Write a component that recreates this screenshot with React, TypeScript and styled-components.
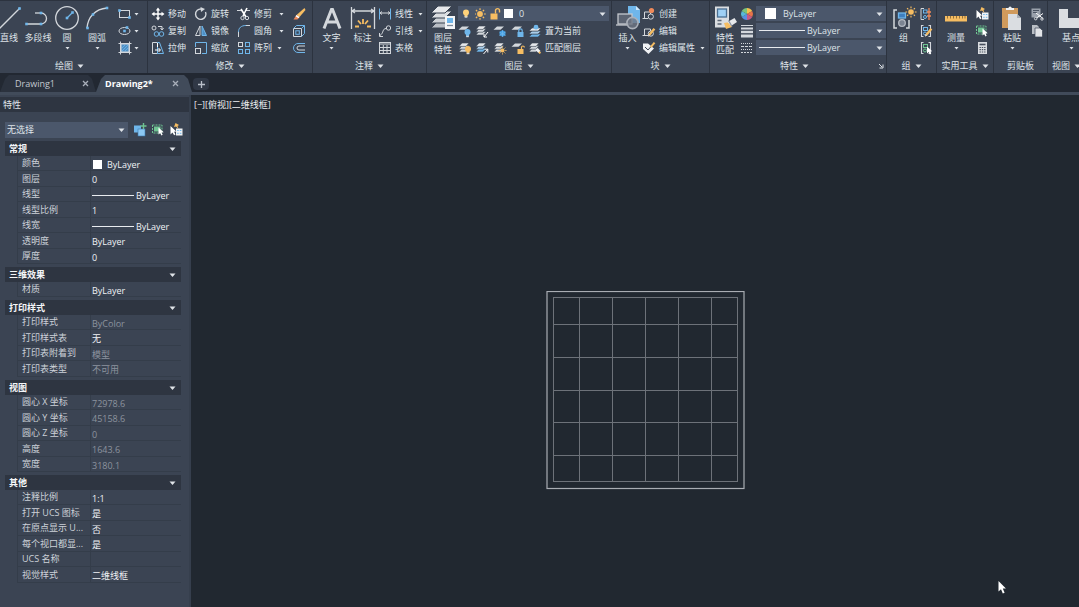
import React from "react";
import styled, { createGlobalStyle, css } from "styled-components";

const c = {
  ribbon: "#3b4453",
  edge: "#2c333f",
  field: "#4b576b",
  bar: "#2e3541",
  strip: "#222832",
  canvas: "#212830",
  text: "#dfe3e8",
  muted: "#8c939e",
  pale: "#d3d7dc",
  blue: "#6fb6ea",
  gold: "#f6bd62",
  green: "#6fc492",
};

const Global = createGlobalStyle`
  *, *::before, *::after { box-sizing: border-box; }
  html, body, #root { height: 100%; }
  body {
    margin: 0;
    overflow: hidden;
    background: ${c.canvas};
    color: ${c.text};
    font: 9px/12px "Open Sans", "Noto Sans CJK SC", sans-serif;
  }
  button, select {
    margin: 0;
    padding: 0;
    border: 0;
    background: transparent;
    color: inherit;
    font: inherit;
  }
  select { appearance: none; outline: 0; }
`;

const Shell = styled.div`
  display: flex;
  flex-direction: column;
  height: 100vh;
`;

/* ---------- ribbon ---------- */

const Ribbon = styled.header`
  display: flex;
  flex: none;
  height: 73px;
  overflow: hidden;
  border-top: 1px solid ${c.edge};
  background: ${c.ribbon};
`;

const Panel = styled.section<{ $w: number; $grow?: boolean }>`
  display: flex;
  flex-direction: column;
  flex: ${(p) => (p.$grow ? "1 0" : "none")};
  flex-basis: ${(p) => p.$w}px;
  border-right: 1px solid ${c.edge};
`;

const PanelBody = styled.div<{ $pad?: number }>`
  display: flex;
  flex: 1;
  padding: 4px 0 0 ${(p) => p.$pad ?? 0}px;
`;

const PanelTitle = styled.button<{ $start?: number }>`
  display: flex;
  align-items: center;
  justify-content: ${(p) => (p.$start ? "flex-start" : "center")};
  gap: 4px;
  height: 15px;
  padding-left: ${(p) => p.$start ?? 0}px;
  white-space: nowrap;
`;

const TitleRow = styled.div`
  display: flex;
  align-items: center;
  padding-right: 2px;
  & > button:first-child { flex: 1; }
`;

const BigButton = styled.button<{ $w: number }>`
  display: flex;
  flex-direction: column;
  align-items: center;
  flex: none;
  width: ${(p) => p.$w}px;
  white-space: nowrap;
  & > svg:first-child { flex: none; margin-bottom: 1px; }
`;

const Stack = styled.div<{ $w?: number }>`
  display: flex;
  flex-direction: column;
  flex: none;
  width: ${(p) => (p.$w ? p.$w + "px" : "auto")};
`;

const Row = styled.div`
  display: flex;
  align-items: center;
  height: 17px;
`;

const Tool = styled.button<{ $gap?: number }>`
  display: flex;
  align-items: center;
  gap: 3px;
  height: 17px;
  margin-right: ${(p) => p.$gap ?? 0}px;
  white-space: nowrap;
`;

const Field = styled.div`
  display: flex;
  align-items: center;
  height: 15px;
  margin: 1px 0;
  padding: 0 3px;
  background: ${c.field};
  select { flex: 1; min-width: 0; height: 100%; }
`;

const Swatch = styled.span<{ $s: number; $l?: number; $r?: number }>`
  flex: none;
  display: inline-block;
  width: ${(p) => p.$s}px;
  height: ${(p) => p.$s}px;
  margin: 0 ${(p) => p.$r ?? 0}px 0 ${(p) => p.$l ?? 0}px;
  background: #fff;
`;

const Rule = styled.span<{ $w: number }>`
  flex: none;
  display: inline-block;
  width: ${(p) => p.$w}px;
  height: 1px;
  margin-right: 2px;
  background: #e8ebef;
`;

/* ---------- file tabs ---------- */

const Tabs = styled.nav`
  display: flex;
  align-items: flex-end;
  flex: none;
  height: 22px;
  border-bottom: 3px solid #414b5a;
  background: ${c.strip};
`;

const Tab = styled.div<{ $active?: boolean }>`
  display: flex;
  align-items: center;
  justify-content: space-between;
  width: 96px;
  height: 17px;
  padding: 0 7px 0 15px;
  background: #2b323e;
  color: #c3c8d0;
  clip-path: polygon(0 100%, 5px 4px, 9px 0, calc(100% - 8px) 0, calc(100% - 4px) 4px, 100% 100%);
  ${(p) =>
    p.$active &&
    css`
      padding: 0 13px 0 9px;
      background: #414b5a;
      color: #fff;
      font-weight: 700;
    `}
`;

const AddTab = styled.button`
  display: flex;
  align-items: center;
  justify-content: center;
  width: 16px;
  height: 12px;
  margin: 0 0 2px 1px;
  border-radius: 4px;
  background: #303846;
`;

/* ---------- workspace ---------- */

const Work = styled.div`
  display: flex;
  flex: 1;
  min-height: 0;
`;

const Palette = styled.aside`
  flex: none;
  width: 191px;
  padding-top: 2px;
  border-right: 2px solid #363f4d;
  background: ${c.ribbon};
`;

const PaletteTitle = styled.h2`
  margin: 0 0 10px;
  padding: 0 3px;
  background: ${c.bar};
  font: inherit;
  line-height: 15px;
`;

const Picker = styled.div`
  display: flex;
  align-items: center;
  gap: 4px;
  margin: 0 0 3px 5px;
  & > button { display: flex; }
`;

const PickerField = styled(Field)`
  width: 123px;
  height: 16px;
  margin: 0 1px 0 0;
  padding-left: 2px;
`;

const Group = styled.section`
  width: 176px;
  margin: 0 0 3px 5px;
`;

const GroupHead = styled.button`
  display: flex;
  align-items: center;
  justify-content: space-between;
  width: 100%;
  height: 15px;
  padding: 0 5px 0 4px;
  background: ${c.bar};
  color: #f4f6f8;
  font-weight: 700;
`;

const Props = styled.table`
  width: 164px;
  margin-left: 12px;
  border-collapse: separate;
  border-spacing: 0;
  table-layout: fixed;
  tr { height: 15px; }
  tr:nth-child(even) { height: 16px; }
  th, td {
    padding: 0;
    border-bottom: 1px solid #343d4a;
    border-left: 1px solid #343d4a;
    line-height: 12px;
    white-space: nowrap;
    text-align: left;
    vertical-align: middle;
  }
  th {
    width: 73px;
    padding-left: 4px;
    color: #cdd2d9;
    font-weight: 400;
  }
`;

const Value = styled.td<{ $dim?: boolean }>`
  && { padding: 2px 0 0 1px; line-height: 11px; }
  color: ${(p) => (p.$dim ? c.muted : "#f0f2f5")};
`;

const ValueLine = styled.div`
  display: flex;
  align-items: center;
`;

const Canvas = styled.main`
  position: relative;
  flex: 1;
  min-width: 0;
  padding: 4px 3px;
  overflow: hidden;
  background: ${c.canvas};
`;

const ViewLabel = styled.div`
  color: #eef0f3;
  white-space: nowrap;
`;

const Plan = styled.svg`
  position: absolute;
  left: 355px;
  top: 196px;
`;

const Pointer = styled.svg`
  position: absolute;
  right: 72px;
  bottom: 12px;
`;

/* ---------- icons ---------- */

type Kids = { children: React.ReactNode };

const S = ({ children }: Kids) => (
  <svg width="14" height="14" viewBox="0 0 14 14" fill="none" stroke={c.pale} aria-hidden="true">
    {children}
  </svg>
);

const B = ({ children }: Kids) => (
  <svg width="26" height="26" viewBox="0 0 26 26" fill="none" stroke={c.pale} strokeWidth="1.3" aria-hidden="true">
    {children}
  </svg>
);

const Down = ({ small }: { small?: boolean }) =>
  small ? (
    <svg width="5" height="8" viewBox="0 0 5 8" aria-hidden="true">
      <path d="M0.5 3h4L2.5 5.5z" fill={c.text} />
    </svg>
  ) : (
    <svg width="7" height="8" viewBox="0 0 7 8" aria-hidden="true">
      <path d="M0.5 2.5h6L3.5 6z" fill={c.text} />
    </svg>
  );

const Dot = ({ x, y }: { x: number; y: number }) => (
  <rect x={x - 1.3} y={y - 1.3} width="2.6" height="2.6" fill={c.blue} stroke="none" />
);

const Sun = ({ x, y, r }: { x: number; y: number; r: number }) => (
  <g stroke={c.gold} strokeWidth={r / 2.4}>
    <circle cx={x} cy={y} r={r} fill={c.gold} stroke="none" />
    {[0, 45, 90, 135].map((a) => (
      <path key={a} transform={`rotate(${a} ${x} ${y})`} d={`M${x} ${y - r * 2}V${y - r * 1.35}M${x} ${y + r * 1.35}V${y + r * 2}`} />
    ))}
  </g>
);

const Sheets = ({ blue }: { blue?: boolean }) => (
  <g stroke={c.ribbon} strokeWidth="0.6">
    <path d="M1 11l3-3.4h7L8 11z" fill={blue ? c.blue : c.pale} />
    <path d="M1 8.2l3-3.4h7L8 8.2z" fill={blue ? "#a9cdea" : c.pale} />
    <path d="M1 5.4L4 2h7L8 5.4z" fill="#e6e8eb" />
  </g>
);

const OneSheet = () => <path d="M0.5 5.8L4 2.4h7L7.5 5.8z" fill={c.pale} stroke="none" />;

const Bulb = ({ x, y, color }: { x: number; y: number; color: string }) => (
  <g stroke="none">
    <circle cx={x} cy={y} r="3" fill={color} />
    <path d={`M${x - 1.5} ${y + 2}h3v2.6h-3z`} fill={color} />
    <path d={`M${x - 1.3} ${y + 3.8}h2.6v1.4h-2.6z`} fill={c.pale} />
  </g>
);

const Lock = ({ color, open }: { color: string; open?: boolean }) => (
  <g>
    <rect x="6.5" y="8" width="6" height="5" fill={color} stroke="none" />
    <path d={open ? "M10.5 8V6.4a1.4 1.4 0 0 1 2.8 0" : "M7.8 8V6.6a1.7 1.7 0 0 1 3.4 0V8"} stroke={color} strokeWidth="1.2" />
  </g>
);

const Arrow = ({ x, y }: { x: number; y: number }) => (
  <path d={`M${x} ${y}v7l1.7-1.5 1.2 2.4 1.3-.6-1.2-2.3 2.2-.3z`} fill="#fff" stroke="none" />
);

const Pencil = () => (
  <g stroke="none">
    <path d="M6.5 10l5-6 1.8 1.5-5 6-2.3.9z" fill={c.gold} />
    <path d="M6.5 10l1.8 1.5-2.3.9z" fill={c.pale} />
  </g>
);

const Block = () => (
  <g strokeWidth="1">
    <path d="M1 11.5h5M2.5 11V5h6v2" />
    <path d="M0.5 11.5h2" />
    <circle cx="8.8" cy="9.6" r="2.6" />
  </g>
);

const Table = () => (
  <S>
    <rect x="1.5" y="1.5" width="11" height="11" />
    <path d="M1.5 3h11M1.5 6.5h11M1.5 9.5h11M5.3 4v8.5M9 4v8.5" />
  </S>
);

const Brackets = () => <path d="M4.5 1.5h-2v11h2M9.5 1.5h2v11h-2" strokeWidth="1.1" />;

const QuickPick = () => (
  <S>
    <path d="M1.5 3v8.4l2-1.8 1.6 2.6 1.4-.8-1.4-2.6 2.2-.4z" fill="#fff" stroke="none" />
    <path d="M6.5 0l3.5 2-1.5 1 1 3-2.5-2.4-2 .4z" fill={c.gold} stroke="none" />
    <rect x="7" y="5.5" width="6.5" height="7" fill="#f0f2f4" stroke="none" />
    <path d="M8.2 7.5h1.5M8.2 10.3h1.5M10.8 7.5h1.6M10.8 10.3h1.6" stroke={c.blue} />
  </S>
);

const SelectObjects = () => (
  <S>
    <rect x="1.5" y="2" width="9.5" height="8" stroke={c.green} strokeDasharray="2 1" />
    <rect x="3" y="3.5" width="6.5" height="5" fill={c.green} stroke="none" />
    <Arrow x={7.5} y={4.5} />
  </S>
);

/* ---------- ribbon panels ---------- */

const Labeled = ({ icon, label, gap, menu }: { icon: React.ReactNode; label: string; gap?: number; menu?: boolean }) => (
  <>
    <Tool $gap={gap}>
      {icon}
      {label}
    </Tool>
    {menu && <Down small />}
  </>
);

const Title = ({ children, start }: { children: string; start?: number }) => (
  <PanelTitle $start={start}>
    {children}
    <Down />
  </PanelTitle>
);

const DrawPanel = () => (
  <Panel $w={148}>
    <PanelBody>
      <BigButton $w={18}>
        <B>
          <path d="M3 24L24 3" />
          <Dot x={23.5} y={3.5} />
        </B>
        直线
      </BigButton>
      <BigButton $w={40}>
        <B>
          <path d="M1 19h15M16 8a5.5 5.5 0 0 1 0 11" />
          <path d="M10 8h6" />
          <Dot x={1.5} y={19} />
          <Dot x={16} y={19} />
          <Dot x={16} y={8} />
        </B>
        多段线
      </BigButton>
      <BigButton $w={18}>
        <B>
          <circle cx="13" cy="13" r="11.3" />
          <path d="M13 13l5-5" stroke={c.blue} />
          <Dot x={13} y={13} />
          <Dot x={18.5} y={7.5} />
        </B>
        圆
        <Down small />
      </BigButton>
      <BigButton $w={42}>
        <B>
          <path d="M3 23C4 12 11 4 23 3" />
          <Dot x={3.5} y={23} />
          <Dot x={9} y={9.5} />
          <Dot x={23} y={3} />
        </B>
        圆弧
        <Down small />
      </BigButton>
      <Stack>
        <Row>
          <Tool aria-label="矩形" $gap={2}>
            <S>
              <rect x="1.5" y="3.5" width="10" height="7" />
              <Dot x={1.5} y={3.5} />
              <Dot x={11.5} y={10.5} />
            </S>
          </Tool>
          <Down small />
        </Row>
        <Row>
          <Tool aria-label="椭圆" $gap={2}>
            <S>
              <ellipse cx="6.5" cy="7" rx="5.5" ry="3.5" />
              <Dot x={6.5} y={7} />
              <Dot x={9} y={3.5} />
            </S>
          </Tool>
          <Down small />
        </Row>
        <Row>
          <Tool aria-label="图案填充" $gap={2}>
            <S>
              <rect x="3" y="3" width="8" height="8" fill="#4f8fc4" />
              <path d="M2.5 0.5v13M11.5 0.5v13M0.5 2.5h13M0.5 11.5h13" />
              <path d="M4 10l6-6M4 7l3-3M7 10l3-3" stroke={c.blue} strokeWidth="0.8" />
            </S>
          </Tool>
          <Down small />
        </Row>
      </Stack>
    </PanelBody>
    <Title start={55}>绘图</Title>
  </Panel>
);

const ModifyPanel = () => (
  <Panel $w={165}>
    <PanelBody $pad={3}>
      <Stack $w={43}>
        <Labeled
          label="移动"
          icon={
            <S>
              <path d="M7 2v10M2 7h10" strokeWidth="1.4" stroke="#fff" />
              <path d="M7 0.5l2.2 3H4.8zM7 13.5l2.2-3H4.8zM.5 7l3-2.2v4.4zM13.5 7l-3-2.2v4.4z" fill="#fff" stroke="none" />
            </S>
          }
        />
        <Labeled
          label="复制"
          icon={
            <S>
              <circle cx="3" cy="4" r="2" />
              <path d="M7 2.5h4v3M9.5 4l1.5 2 1.6-2" />
              <circle cx="5.5" cy="10" r="2.3" stroke={c.blue} />
              <circle cx="10.5" cy="10" r="2.3" stroke={c.blue} />
            </S>
          }
        />
        <Labeled
          label="拉伸"
          icon={
            <S>
              <path d="M6.5 1.5h-5v11h5" />
              <path d="M6.5 1.5h2l4 11h-6z" stroke={c.blue} />
              <path d="M4 9h5M7.5 7L9.5 9l-2 2M6.5 2v4" stroke="#fff" />
            </S>
          }
        />
      </Stack>
      <Stack $w={43}>
        <Labeled
          label="旋转"
          icon={
            <S>
              <path d="M11.5 5A5.2 5.2 0 1 1 7.5 2" strokeWidth="1.4" />
              <path d="M6.5 0l4.5 2-4 3z" fill={c.pale} stroke="none" />
            </S>
          }
        />
        <Labeled
          label="镜像"
          icon={
            <S>
              <path d="M6 2v9.5H1.5z" />
              <path d="M8 2v9.5h4.5z" stroke={c.blue} fill="#4f8fc4" />
            </S>
          }
        />
        <Labeled
          label="缩放"
          icon={
            <S>
              <path d="M1.5 6V1.5h11v11H8" stroke={c.blue} />
              <rect x="1.5" y="7.5" width="5" height="5" />
            </S>
          }
        />
      </Stack>
      <Stack $w={55}>
        <Row>
          <Labeled
            label="修剪"
            gap={7}
            menu
            icon={
              <S>
                <path d="M0 3.5h5M9 3.5h4" stroke={c.pale} />
                <path d="M4 2l5 8M10 1L6 9" stroke="#fff" strokeWidth="1.6" />
                <circle cx="5.5" cy="11" r="1.7" />
                <circle cx="10" cy="11" r="1.7" />
              </S>
            }
          />
        </Row>
        <Row>
          <Labeled
            label="圆角"
            gap={7}
            menu
            icon={
              <S>
                <path d="M1.5 8C1.5 4 4 1.5 9 1.5" stroke={c.blue} />
                <path d="M1.5 8v5M9 1.5h4" />
              </S>
            }
          />
        </Row>
        <Row>
          <Labeled
            label="阵列"
            gap={5}
            menu
            icon={
              <S>
                <rect x="1.5" y="1.5" width="4" height="4" />
                <rect x="8.5" y="1.5" width="4" height="4" stroke={c.blue} />
                <rect x="1.5" y="8.5" width="4" height="4" stroke={c.blue} />
                <rect x="8.5" y="8.5" width="4" height="4" stroke={c.blue} />
              </S>
            }
          />
        </Row>
      </Stack>
      <Stack>
        <Tool aria-label="删除">
          <S>
            <path d="M12.5 1L13.5 3 7.5 10 4.5 8z" fill={c.gold} stroke="none" />
            <path d="M4.5 8l3 2-2 2.4H1.5z" fill="#f08a5a" stroke="none" />
            <path d="M4.5 8l3 2-1 1.2-3-2z" fill="#fff" stroke="none" />
          </S>
        </Tool>
        <Tool aria-label="分解">
          <S>
            <path d="M1.5 4.5h8v8h-8z" />
            <path d="M1.5 4.5l3-3h8v8l-3 3M9.5 4.5l3-3" stroke={c.blue} />
            <rect x="3.8" y="6.8" width="3.5" height="3.5" stroke={c.blue} />
          </S>
        </Tool>
        <Tool aria-label="偏移">
          <S>
            <path d="M13 2.5H6a4.5 4.5 0 0 0 0 9h7" stroke={c.blue} />
            <path d="M13 5H7a2 2 0 0 0 0 4h6" />
          </S>
        </Tool>
      </Stack>
    </PanelBody>
    <Title>修改</Title>
  </Panel>
);

const AnnotatePanel = () => (
  <Panel $w={114}>
    <PanelBody $pad={3}>
      <BigButton $w={31}>
        <B>
          <path d="M5 23.5L12.5 4.5h1L21 23.5M8 17h10" strokeWidth="3" />
        </B>
        文字
        <Down small />
      </BigButton>
      <BigButton $w={31}>
        <B>
          <path d="M1.5 2v22M24.5 2v22M2 6h22M5 4L2 6l3 2M21 4l3 2-3 2" />
          <path d="M13 14v5M8 15.5l3 3.5M18 15.5l-3 3.5M5 21.5h4M17 21.5h4" stroke={c.gold} strokeWidth="1.8" />
        </B>
        标注
      </BigButton>
      <Stack>
        <Row>
          <Labeled
            label="线性"
            gap={5}
            menu
            icon={
              <S>
                <path d="M1.5 1.5v11M12.5 1.5v11" stroke={c.blue} />
                <path d="M2 6h10M4 4.5L2 6l2 1.5M10 4.5L12 6l-2 1.5" />
              </S>
            }
          />
        </Row>
        <Row>
          <Labeled
            label="引线"
            gap={5}
            menu
            icon={
              <S>
                <circle cx="10.5" cy="4" r="2.2" />
                <path d="M8.3 4.5C4 4.5 6 9 2 11.5M1.5 9v3.5H5" />
              </S>
            }
          />
        </Row>
        <Row>
          <Labeled label="表格" icon={<Table />} />
        </Row>
      </Stack>
    </PanelBody>
    <Title>注释</Title>
  </Panel>
);

const LayerPanel = () => (
  <Panel $w={185}>
    <PanelBody $pad={1}>
      <BigButton $w={30}>
        <B>
          <g stroke={c.ribbon} strokeWidth="1">
            <path d="M1 23l7-7h14l-7 7z" fill="#b9bec5" />
            <path d="M1 18l7-7h14l-7 7z" fill="#cdd1d6" />
            <path d="M1 13l7-7h14l-7 7z" fill="#dadde1" />
            <path d="M1 8l7-7h14l-7 7z" fill="#e6e8eb" />
          </g>
          <rect x="15" y="11" width="10" height="13" fill="#f3f5f7" stroke="none" />
          <rect x="17" y="13" width="6" height="5" fill={c.blue} stroke="none" />
          <path d="M17 20.5h6" stroke="#7d8a99" />
        </B>
        图层
        <br />
        特性
      </BigButton>
      <Stack $w={151}>
        <Field>
          <S>
            <Bulb x={5} y={5.5} color="#ffd27a" />
          </S>
          <S>
            <Sun x={5} y={7} r={2.9} />
          </S>
          <S>
            <rect x="1.5" y="6.5" width="7" height="6" fill={c.gold} stroke="none" />
            <path d="M6.5 6.5V3.6a2 2 0 0 1 4 0v2" stroke={c.gold} strokeWidth="1.4" />
          </S>
          <Swatch $s={9} $l={1} $r={6} />
          <select aria-label="图层">
            <option>0</option>
          </select>
          <Down />
        </Field>
        <Row>
          <Tool aria-label="关" $gap={3}>
            <S><OneSheet /><Bulb x={9.5} y={8} color={c.blue} /></S>
          </Tool>
          <Tool aria-label="隔离" $gap={4}>
            <S><Sheets /><path d="M13 8l-4 5M9 10v3h3" stroke="#fff" /></S>
          </Tool>
          <Tool aria-label="冻结" $gap={4}>
            <S><OneSheet /><circle cx="9.5" cy="9.5" r="3" fill="#3f9be0" stroke="none" /><path d="M9.5 6v7M6.3 8l6.4 3.4M12.7 8l-6.4 3.4" stroke={c.blue} strokeWidth="0.8" /></S>
          </Tool>
          <Tool aria-label="锁定" $gap={3}>
            <S><OneSheet /><Lock color={c.blue} /></S>
          </Tool>
          <Labeled label="置为当前" icon={<S><g stroke={c.ribbon} strokeWidth=".6"><path d="M1 13l3-3h9l-3 3z" fill={c.blue} /><path d="M1 10l3-3h9l-3 3z" fill="#a9cdea" /><path d="M1 7l3-3h9l-3 3z" fill="#e6e8eb" /></g><circle cx="8" cy="3.2" r="2.4" fill={c.blue} stroke="none" /></S>} />
        </Row>
        <Row>
          <Tool aria-label="打开所有图层" $gap={3}>
            <S><Sheets /><Bulb x={10} y={8} color={c.gold} /></S>
          </Tool>
          <Tool aria-label="取消隔离" $gap={4}>
            <S><Sheets blue /><path d="M8.5 13l4-4.5M9.5 8.2h3.3v3.3" stroke="#fff" /></S>
          </Tool>
          <Tool aria-label="解冻所有图层" $gap={4}>
            <S><Sheets /><Sun x={9.5} y={9.5} r={2} /></S>
          </Tool>
          <Tool aria-label="解锁" $gap={3}>
            <S><OneSheet /><Lock color={c.gold} open /></S>
          </Tool>
          <Labeled label="匹配图层" icon={<S><Sheets /><path d="M8.5 8l3 3" stroke="#f0f2f4" strokeWidth="3" /><path d="M11 11l1.4 1.4" stroke={c.gold} strokeWidth="2" /></S>} />
        </Row>
      </Stack>
    </PanelBody>
    <Title>图层</Title>
  </Panel>
);

const BlockPanel = () => (
  <Panel $w={98}>
    <PanelBody $pad={1}>
      <BigButton $w={29}>
        <B>
          <path d="M13 1h8l4 4v13H13z" fill={c.blue} stroke="none" />
          <path d="M21 1v4h4z" fill="#cfe6f8" stroke="none" />
          <rect x="3" y="9" width="14" height="10" fill="#5c6472" stroke="#c4c8ce" />
          <path d="M1 20h13" stroke="#c4c8ce" />
          <circle cx="17.5" cy="18" r="5.6" fill="#6f7784" fillOpacity="0.8" stroke="#aab0b9" strokeWidth="1.6" />
        </B>
        插入
        <Down small />
      </BigButton>
      <Stack>
        <Labeled label="创建" icon={<S><Block /><circle cx="9.5" cy="3.5" r="2.6" fill="#f08a5a" stroke="none" /></S>} />
        <Labeled label="编辑" icon={<S><Block /><Pencil /></S>} />
        <Row>
          <Labeled
            label="编辑属性"
            gap={5}
            menu
            icon={
              <S>
                <path d="M1 2.5h5l6 5-5.5 5.5L1 8z" fill="#f0f2f4" stroke="none" />
                <path d="M3 6l3 3 6.5-7.5" stroke={c.ribbon} />
                <path d="M8 5.5l3.8-4.5 1.5 1.2-3.8 4.6z" fill={c.gold} stroke="none" />
              </S>
            }
          />
        </Row>
      </Stack>
    </PanelBody>
    <Title>块</Title>
  </Panel>
);

const PropertyPanel = () => (
  <Panel $w={177}>
    <PanelBody>
      <BigButton $w={30}>
        <B>
          <rect x="3" y="1.5" width="14" height="21" fill="#dadde1" stroke="none" />
          <rect x="5.5" y="4" width="9" height="8" fill="#9fd0f5" stroke="#4b6f92" />
          <path d="M5.5 15.5h4M5.5 19h4" stroke="#5b6675" />
          <path d="M14 24l-2-6 6-1 2 5z" fill={c.gold} stroke="none" />
          <path d="M15.5 17l7-4 2.5 4-6 4z" fill="#e6e8eb" stroke="none" />
          <path d="M16.5 15.5l3.5 6" stroke="#8b93a0" />
        </B>
        特性
        <br />
        匹配
      </BigButton>
      <Stack $w={16}>
        <Tool aria-label="对象颜色">
          <S>
            <g stroke="none">
              <path d="M7 7V1a6 6 0 0 1 5.2 3z" fill="#f4c04e" />
              <path d="M7 7l5.2-3a6 6 0 0 1 0 6z" fill="#e8734a" />
              <path d="M7 7l5.2 3A6 6 0 0 1 7 13z" fill="#c95a86" />
              <path d="M7 7v6a6 6 0 0 1-5.2-3z" fill="#5a8fe0" />
              <path d="M7 7l-5.2 3a6 6 0 0 1 0-6z" fill="#58b8d8" />
              <path d="M7 7L1.8 4A6 6 0 0 1 7 1z" fill="#7cc47a" />
            </g>
          </S>
        </Tool>
        <Tool aria-label="线宽">
          <S>
            <path d="M1 1.5h12" />
            <path d="M1 4.5h12" strokeWidth="2" />
            <path d="M1 8h12" strokeWidth="2.4" />
            <path d="M1 12h12" strokeWidth="3" />
          </S>
        </Tool>
        <Tool aria-label="线型">
          <S>
            <path d="M1 2.5h12" strokeDasharray="1 1" />
            <path d="M1 5.5h12" strokeDasharray="3 1" />
            <path d="M1 8.5h12" strokeDasharray="1 1" />
            <path d="M1 11.5h12" strokeDasharray="2 1" />
          </S>
        </Tool>
      </Stack>
      <Stack $w={130}>
        <Field>
          <Swatch $s={11} $l={6} $r={7} />
          <select aria-label="对象颜色"><option>ByLayer</option></select>
          <Down />
        </Field>
        <Field>
          <Rule $w={46} />
          <select aria-label="线宽"><option>ByLayer</option></select>
          <Down />
        </Field>
        <Field>
          <Rule $w={46} />
          <select aria-label="线型"><option>ByLayer</option></select>
          <Down />
        </Field>
      </Stack>
    </PanelBody>
    <TitleRow>
      <Title start={70}>特性</Title>
      <button aria-label="特性对话框">
        <svg width="6" height="6" viewBox="0 0 6 6" aria-hidden="true">
          <path d="M1 1l3 3M5 1.5V5H1.5" fill="none" stroke={c.text} />
        </svg>
      </button>
    </TitleRow>
  </Panel>
);

const GroupPanel = () => (
  <Panel $w={50}>
    <PanelBody $pad={1}>
      <BigButton $w={31}>
        <B>
          <path d="M6 5H3v18h3M15 23h3v-8" strokeWidth="1.5" />
          <rect x="7.5" y="8" width="7" height="5" fill="#3e7fc0" stroke={c.blue} />
          <circle cx="11" cy="18" r="3.3" fill="#7b8492" stroke="#b3b9c2" />
          <Sun x={20} y={7} r={2.8} />
        </B>
        组
      </BigButton>
      <Stack>
        <Tool aria-label="解除编组">
          <S><path d="M5 1.5H2v11h3" /><rect x="4.5" y="3" width="3.5" height="3" stroke={c.blue} /><circle cx="6" cy="10" r="1.5" stroke={c.blue} /><path d="M10 1v12M8 5h4M8 9h4" stroke="#f08a5a" strokeWidth="1.3" /></S>
        </Tool>
        <Tool aria-label="组编辑">
          <S><Brackets /><rect x="4.5" y="3.5" width="4" height="3" stroke={c.blue} /><circle cx="6" cy="9.5" r="1.5" stroke={c.blue} /><Pencil /></S>
        </Tool>
        <Tool aria-label="组选择">
          <S><Brackets /><rect x="4.5" y="3.5" width="4" height="3" stroke={c.green} /><circle cx="6" cy="9.5" r="1.5" stroke={c.green} /><Arrow x={8} y={5.5} /></S>
        </Tool>
      </Stack>
    </PanelBody>
    <Title>组</Title>
  </Panel>
);

const UtilityPanel = () => (
  <Panel $w={57}>
    <PanelBody>
      <BigButton $w={38}>
        <B>
          <rect x="2" y="11" width="22" height="5.5" fill={c.gold} stroke="none" />
          <path d="M4.5 11v2.5M7.5 11v2.5M10.5 11v2.5M13.5 11v2.5M16.5 11v2.5M19.5 11v2.5M22 11v2.5" stroke="#8a6a35" strokeWidth="0.9" />
        </B>
        测量
        <Down small />
      </BigButton>
      <Stack>
        <Tool aria-label="快速选择"><QuickPick /></Tool>
        <Tool aria-label="全部选择"><SelectObjects /></Tool>
        <Tool aria-label="计算器">
          <S>
            <rect x="3" y="1" width="9" height="12" fill="#d9dce0" stroke="none" />
            <path d="M4.5 3.5h6" stroke="#48505e" strokeWidth="1.6" />
            <path d="M4.5 6.5h6M4.5 8.7h6M4.5 11h6" stroke="#48505e" strokeWidth="1.2" strokeDasharray="1.4 .9" />
          </S>
        </Tool>
      </Stack>
    </PanelBody>
    <Title>实用工具</Title>
  </Panel>
);

const ClipboardPanel = () => (
  <Panel $w={54}>
    <PanelBody>
      <BigButton $w={36}>
        <B>
          <rect x="3" y="3" width="16" height="20" fill="#d09a5c" stroke="none" />
          <path d="M7 5V3h2.5a1.6 1.6 0 0 1 3.2 0H15v2z" fill="#f0f2f4" stroke="none" />
          <path d="M9 9h9l4 4v12H9z" fill="#dadde1" stroke="none" />
          <path d="M18 9v4h4z" fill="#a9afb8" stroke="none" />
        </B>
        粘贴
        <Down small />
      </BigButton>
      <Stack>
        <Tool aria-label="剪切">
          <S>
            <rect x="1.5" y="1.5" width="9" height="9" fill="#9aa1ac" stroke="none" />
            <path d="M3 3.5h6M3 5.5h4" stroke="#4b5463" />
            <path d="M6 6l7 5.5M13 6.5L6.5 11" stroke="#fff" />
            <circle cx="5.7" cy="11.6" r="1.3" /><circle cx="12" cy="12" r="1.2" />
          </S>
        </Tool>
        <Tool aria-label="复制剪裁">
          <S>
            <path d="M2 1h5l2 2v7H2z" fill="#b9bec5" stroke="none" />
            <path d="M5 4h5l2.5 2.5V13H5z" fill="#e2e4e8" stroke={c.ribbon} strokeWidth=".7" />
          </S>
        </Tool>
      </Stack>
    </PanelBody>
    <PanelTitle>剪贴板</PanelTitle>
  </Panel>
);

const ViewPanel = () => (
  <Panel $w={56} $grow>
    <PanelBody $pad={10}>
      <BigButton $w={26}>
        <B>
          <path d="M1 4h9v9h16v10H1z" fill="#dadde1" stroke="none" />
        </B>
        基点
        <Down small />
      </BigButton>
    </PanelBody>
    <Title start={4}>视图</Title>
  </Panel>
);

/* ---------- palette ---------- */

type Item = { name: string; value?: string; dim?: boolean; kind?: "swatch" | "line" };

const groups: { title: string; items: Item[] }[] = [
  {
    title: "常规",
    items: [
      { name: "颜色", value: "ByLayer", kind: "swatch" },
      { name: "图层", value: "0" },
      { name: "线型", value: "ByLayer", kind: "line" },
      { name: "线型比例", value: "1" },
      { name: "线宽", value: "ByLayer", kind: "line" },
      { name: "透明度", value: "ByLayer" },
      { name: "厚度", value: "0" },
    ],
  },
  { title: "三维效果", items: [{ name: "材质", value: "ByLayer" }] },
  {
    title: "打印样式",
    items: [
      { name: "打印样式", value: "ByColor", dim: true },
      { name: "打印样式表", value: "无" },
      { name: "打印表附着到", value: "模型", dim: true },
      { name: "打印表类型", value: "不可用", dim: true },
    ],
  },
  {
    title: "视图",
    items: [
      { name: "圆心 X 坐标", value: "72978.6", dim: true },
      { name: "圆心 Y 坐标", value: "45158.6", dim: true },
      { name: "圆心 Z 坐标", value: "0", dim: true },
      { name: "高度", value: "1643.6", dim: true },
      { name: "宽度", value: "3180.1", dim: true },
    ],
  },
  {
    title: "其他",
    items: [
      { name: "注释比例", value: "1:1" },
      { name: "打开 UCS 图标", value: "是" },
      { name: "在原点显示 U...", value: "否" },
      { name: "每个视口都显...", value: "是" },
      { name: "UCS 名称" },
      { name: "视觉样式", value: "二维线框" },
    ],
  },
];

const PropertyPalette = () => (
  <Palette>
    <PaletteTitle>特性</PaletteTitle>
    <Picker>
      <PickerField>
        <select aria-label="选择对象"><option>无选择</option></select>
        <Down />
      </PickerField>
      <button aria-label="切换 PICKADD">
        <S>
          <rect x="1" y="2.5" width="7" height="7" fill={c.blue} stroke="none" />
          <rect x="5" y="6" width="7" height="7" fill="#8cc8f2" stroke="#3a79ad" strokeWidth=".6" />
          <path d="M10.5 0v6M7.5 3h6" stroke={c.green} strokeWidth="1.4" />
        </S>
      </button>
      <button aria-label="选择对象"><SelectObjects /></button>
      <button aria-label="快速选择"><QuickPick /></button>
    </Picker>
    {groups.map((g) => (
      <Group key={g.title}>
        <GroupHead>
          {g.title}
          <Down />
        </GroupHead>
        <Props>
          <tbody>
            {g.items.map((it) => (
              <tr key={it.name}>
                <th scope="row">{it.name}</th>
                <Value $dim={it.dim}>
                  <ValueLine>
                    {it.kind === "swatch" && <Swatch $s={9} $l={1} $r={5} />}
                    {it.kind === "line" && <Rule $w={42} />}
                    {it.value}
                  </ValueLine>
                </Value>
              </tr>
            ))}
          </tbody>
        </Props>
      </Group>
    ))}
  </Palette>
);

const Close = () => (
  <svg width="7" height="7" viewBox="0 0 7 7" aria-hidden="true">
    <path d="M1 1l5 5M6 1L1 6" stroke="#a9afba" strokeWidth="1.3" />
  </svg>
);

const verticals = [33.5, 66.5, 99.5, 132.5, 165.5];
const horizontals = [33.5, 66.5, 99.5, 131.5, 164.5];

export default function App() {
  return (
    <Shell>
      <Global />
      <Ribbon>
        <DrawPanel />
        <ModifyPanel />
        <AnnotatePanel />
        <LayerPanel />
        <BlockPanel />
        <PropertyPanel />
        <GroupPanel />
        <UtilityPanel />
        <ClipboardPanel />
        <ViewPanel />
      </Ribbon>
      <Tabs>
        <Tab>
          Drawing1
          <button aria-label="关闭 Drawing1"><Close /></button>
        </Tab>
        <Tab $active>
          Drawing2*
          <button aria-label="关闭 Drawing2"><Close /></button>
        </Tab>
        <AddTab aria-label="新图形">
          <svg width="7" height="7" viewBox="0 0 7 7" aria-hidden="true">
            <path d="M3.5 0v7M0 3.5h7" stroke="#b9bfc9" strokeWidth="1.3" />
          </svg>
        </AddTab>
      </Tabs>
      <Work>
        <PropertyPalette />
        <Canvas>
          <ViewLabel>[−][俯视][二维线框]</ViewLabel>
          <Plan width="199" height="199" viewBox="0 0 199 199" fill="none" aria-label="网格图形">
            <rect x="1" y="0.5" width="197" height="197" stroke="#a9adb3" strokeWidth="1.2" />
            <rect x="7.5" y="6.5" width="184" height="184" stroke="#6d7279" />
            {verticals.map((x) => (
              <path key={x} d={`M${x} 6.5V190.5`} stroke="#6d7279" />
            ))}
            {horizontals.map((y) => (
              <path key={y} d={`M7.5 ${y}H191.5`} stroke="#6d7279" />
            ))}
          </Plan>
          <Pointer width="10" height="15" viewBox="0 0 10 15" aria-hidden="true">
            <path d="M1.5 1v10.5L4 9.3l1.8 4.2 1.8-.8-1.8-4.1h3.1z" fill="#fff" />
          </Pointer>
        </Canvas>
      </Work>
    </Shell>
  );
}
